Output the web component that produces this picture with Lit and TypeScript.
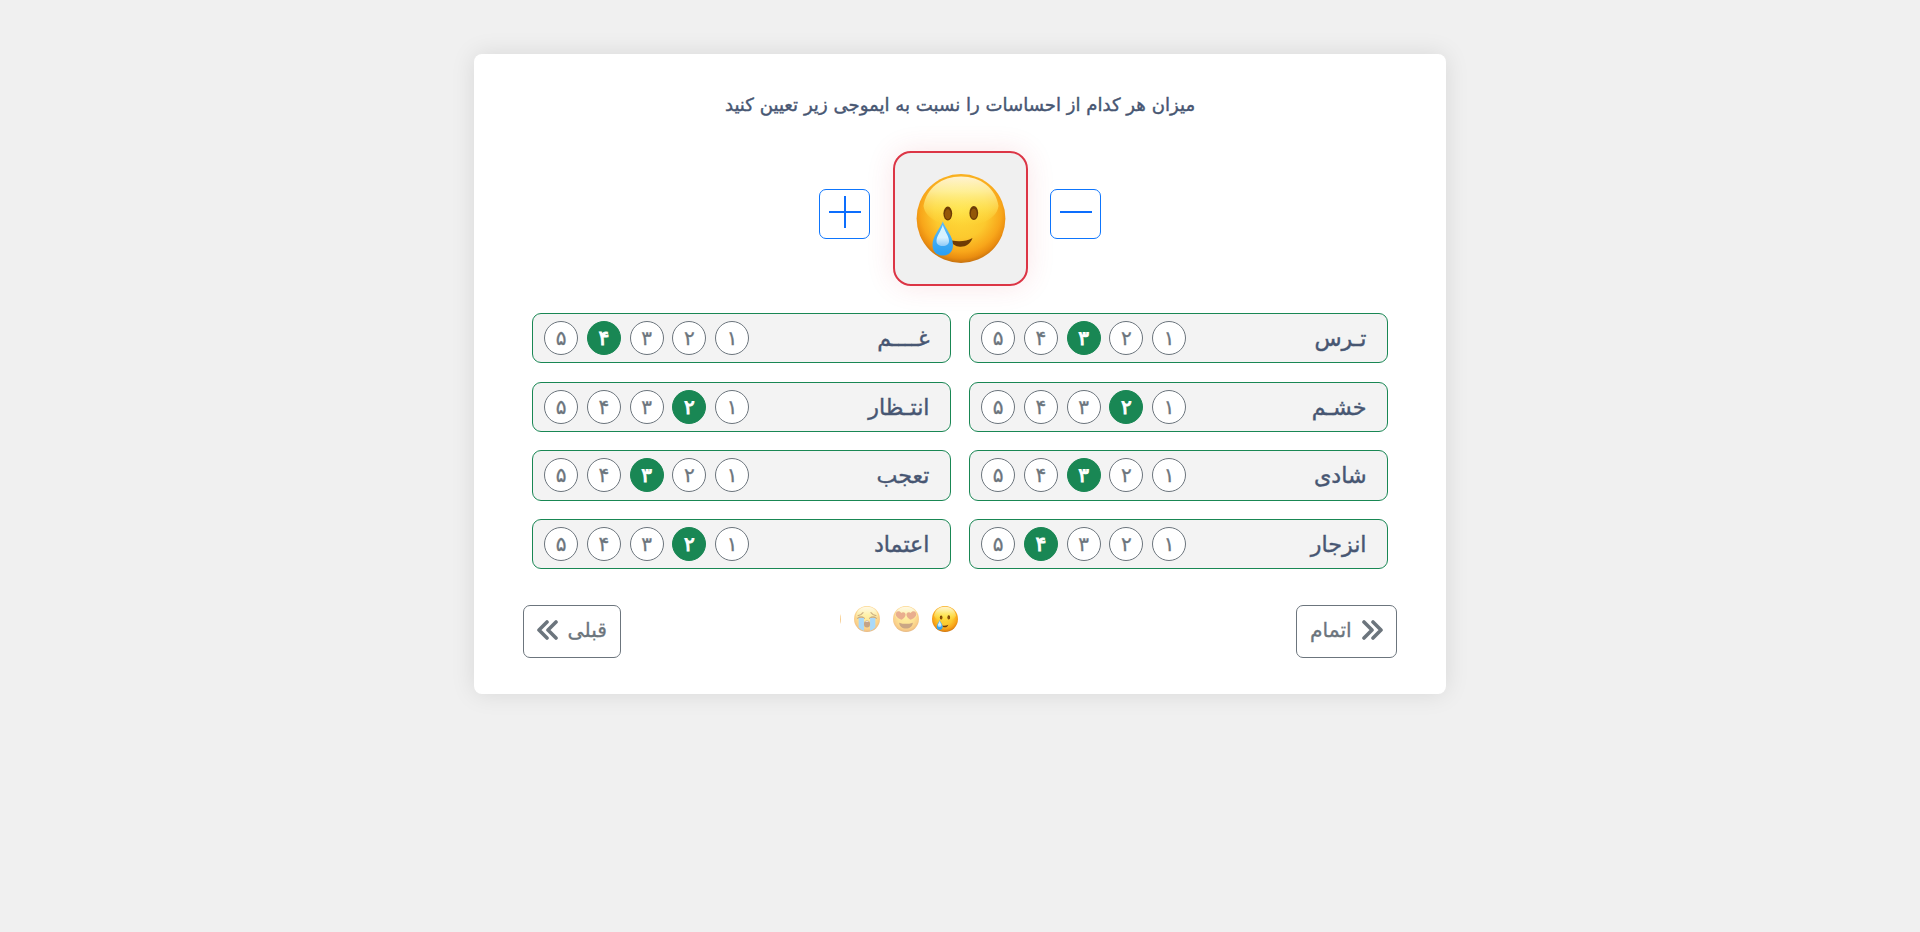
import { LitElement, html, css, svg } from "lit";
import { customElement, property } from "lit/decorators.js";
import { classMap } from "lit/directives/class-map.js";

const DIGITS = ["۱", "۲", "۳", "۴", "۵"];

const EMOTIONS = [
  { label: "تـرس", value: 3 },
  { label: "غــــم", value: 4 },
  { label: "خشـم", value: 2 },
  { label: "انتـظار", value: 2 },
  { label: "شادی", value: 3 },
  { label: "تعجب", value: 3 },
  { label: "انزجار", value: 4 },
  { label: "اعتماد", value: 2 },
];

const faceDefs = svg`
  <defs>
    <radialGradient id="skin" cx="0.5" cy="0.42" r="0.6">
      <stop offset="0" stop-color="#ffdc3c" />
      <stop offset="0.5" stop-color="#fcc92e" />
      <stop offset="0.76" stop-color="#f8a61a" />
      <stop offset="0.88" stop-color="#ea8d10" />
      <stop offset="1" stop-color="#b9680f" />
    </radialGradient>
    <linearGradient id="shine" x1="0" y1="0" x2="0" y2="1">
      <stop offset="0" stop-color="#fff6dc" stop-opacity="0.95" />
      <stop offset="0.3" stop-color="#fff8b0" stop-opacity="0.8" />
      <stop offset="0.65" stop-color="#fff06a" stop-opacity="0.5" />
      <stop offset="1" stop-color="#ffe040" stop-opacity="0" />
    </linearGradient>
    <linearGradient id="drop" x1="0" y1="0" x2="0" y2="1">
      <stop offset="0" stop-color="#5fbcf6" />
      <stop offset="1" stop-color="#2a9ff2" />
    </linearGradient>
    <linearGradient id="gleam" x1="0" y1="0" x2="0" y2="1">
      <stop offset="0" stop-color="#d2f3ff" />
      <stop offset="0.6" stop-color="#d8f2ff" />
      <stop offset="1" stop-color="#8fcaf7" />
    </linearGradient>
  </defs>
  <circle cx="44.5" cy="44.5" r="44.4" fill="url(#skin)" />
  <path d="M44.500 2.500C64 2.500 79 14 82 32 80 46 62 52 44.500 52S9 46 7 32C10 14 25 2.500 44.500 2.500z" fill="url(#shine)" />`;

@customElement("emoji-face")
export class EmojiFace extends LitElement {
  @property() kind = "tear";

  static styles = css`
    :host { display: block; }
    svg { display: block; width: 100%; height: 100%; }
  `;

  private features() {
    if (this.kind === "love") {
      return svg`
        <path d="M29 47C12 41 6 30 11 22c4-6 14-5 17 2 5-5 14-3 15 4 1 8-7 15-14 19z" fill="#d4601f" />
        <path d="M60 47c17-6 23-17 18-25-4-6-14-5-17 2-5-5-14-3-15 4-1 8 7 15 14 19z" fill="#d4601f" />
        <path d="M21 57q23 8 47 0c-1 13-11 20-23.500 20S22 70 21 57z" fill="#96500b" />`;
    }
    if (this.kind === "cry") {
      return svg`
        <path d="M14 33q10-1 17-10M75 33q-10-1-17-10" fill="none" stroke="#9a600b" stroke-width="4" stroke-linecap="round" />
        <path d="M13 42q11-8 22 0M54 42q11-8 22 0" fill="none" stroke="#9a600b" stroke-width="5" stroke-linecap="round" />
        <path d="M16 41h18v44q-10-3-18-11zM55 41h18v33q-8 8-18 11z" fill="#55b4f7" />
        <ellipse cx="44.500" cy="62" rx="10.500" ry="12" fill="#8b4a12" />
        <path d="M37 55q8-6 15 0z" fill="#fff" />`;
    }
    if (this.kind === "plain") return svg``;
    return svg`
      <ellipse cx="31.300" cy="39.600" rx="4.400" ry="7" fill="#6d3b06" />
      <ellipse cx="57.300" cy="39" rx="4.400" ry="7" fill="#6d3b06" />
      <ellipse cx="31.300" cy="40.300" rx="3" ry="5" fill="#945708" />
      <ellipse cx="57.300" cy="39.700" rx="3" ry="5" fill="#945708" />
      <path d="M35 66.500q12 2.500 21-2.500C54 70 49 73 43.500 72.700 39 72.500 35 70 35 66.500z" fill="#6f3b05" />
      <path d="M26.300 47.500C29 55 36.500 62 36.500 71c0 6.500-4 10.600-10.200 10.600S16 77.500 16 71c0-9 7.500-16 10.300-23.500z" fill="url(#drop)" />
      <path d="M26.300 51C28 57 32.500 62 32.500 67c0 3.500-2.500 5-6.200 5S20 70.500 20 67c0-5 4.600-10 6.300-16z" fill="url(#gleam)" />`;
  }

  render() {
    return html`<svg viewBox="0 0 89 89">${faceDefs}${this.features()}</svg>`;
  }
}

@customElement("emotion-row")
export class EmotionRow extends LitElement {
  @property() label = "";
  @property({ type: Number }) value = 0;

  static styles = css`
    :host {
      display: flex;
      align-items: center;
      justify-content: space-between;
      box-sizing: border-box;
      height: 50.200px;
      padding: 0 20.500px 0 11px;
      border: 1px solid #198754;
      border-radius: 9px;
      background: #f3f3f3;
    }
    .label {
      font-size: 22.200px;
      line-height: 30px;
      color: #475672;
      -webkit-text-stroke: 0.400px #475672;
      white-space: nowrap;
    }
    .scale { display: flex; gap: 8.800px; }
    .dot {
      display: flex;
      align-items: center;
      justify-content: center;
      box-sizing: border-box;
      width: 34px;
      height: 34px;
      border: 1px solid #6c757d;
      border-radius: 50%;
      background: #fff;
      color: #6c757d;
      font-size: 20px;
      line-height: 1;
      -webkit-text-stroke: 0.300px #6c757d;
    }
    .dot.on { background: #198754; border-color: #198754; color: #fff; -webkit-text-stroke: 1px #fff; }
  `;

  render() {
    return html`
      <span class="label">${this.label}</span>
      <div class="scale">
        ${DIGITS.map((d, i) => html`<span class=${classMap({ dot: true, on: i + 1 === this.value })}>${d}</span>`)}
      </div>`;
  }
}

@customElement("app-root")
export class AppRoot extends LitElement {
  static styles = css`
    :host {
      display: block;
      box-sizing: border-box;
      height: 932px;
      padding-top: 54px;
      background: #f0f0f0;
      direction: rtl;
      font-family: "DejaVu Sans", sans-serif;
    }
    .card {
      box-sizing: border-box;
      display: flex;
      flex-direction: column;
      width: 972px;
      height: 640px;
      margin: 0 auto;
      padding: 35px 49px 36px;
      border-radius: 8px;
      background: #fff;
      box-shadow: 0 0 24px rgba(0, 0, 0, 0.1);
    }
    .title {
      padding-top: 1px;
      font-size: 18.100px;
      line-height: 30px;
      text-align: center;
      color: #475672;
      -webkit-text-stroke: 0.400px #475672;
      white-space: nowrap;
    }
    .stage { display: flex; align-items: center; justify-content: center; gap: 22px; margin-top: 31px; }
    .step {
      box-sizing: border-box;
      width: 51px;
      height: 50px;
      padding: 6px 8.500px;
      margin-bottom: 9px;
      border: 1px solid #0d75fd;
      border-radius: 7px;
      color: #0d6efd;
    }
    .step.plus { margin-right: 1px; }
    .step svg { display: block; width: 32px; height: 32px; }
    .frame {
      box-sizing: border-box;
      width: 135px;
      height: 135px;
      padding: 21px 20.500px;
      border: 2px solid #dc3545;
      border-radius: 18px;
      background: #f0f0f0;
      box-shadow: 0 0 28px rgba(220, 53, 69, 0.13);
    }
    .frame emoji-face { width: 90px; height: 89px; }
    .grid { display: grid; grid-template-columns: 419px 419px; justify-content: center; gap: 18.500px 18px; margin-top: 27px; }
    .foot { display: flex; justify-content: space-between; margin-top: auto; }
    .nav {
      box-sizing: border-box;
      display: flex;
      align-items: center;
      justify-content: space-between;
      height: 53px;
      padding: 0 13px 3px;
      border: 1px solid #6c757d;
      border-radius: 7px;
      color: #6c757d;
      font-size: 20.300px;
      -webkit-text-stroke: 0.300px #6c757d;
    }
    .nav svg { display: block; width: 21px; height: 20px; }
    .done { width: 101px; }
    .prev { width: 98px; }
    .strip {
      display: flex;
      gap: 13.300px;
      box-sizing: border-box;
      width: 237px;
      height: 28px;
      padding-right: 118.600px;
      overflow: hidden;
    }
    .strip emoji-face { flex: none; width: 26px; height: 26px; margin-top: 1px; opacity: 0.5; }
    .strip emoji-face.current { opacity: 1; }
  `;

  render() {
    return html`
      <main class="card">
        <div class="title"><span>میزان هر کدام از احساسات را نسبت به ایموجی زیر تعیین کنید</span></div>
        <div class="stage">
          <div class="step"><svg viewBox="0 0 32 32"><path d="M0 16h32" stroke="currentColor" stroke-width="2" /></svg></div>
          <div class="frame"><emoji-face></emoji-face></div>
          <div class="step plus"><svg viewBox="0 0 32 32"><path d="M0 16h32M16 0v32" stroke="currentColor" stroke-width="2" /></svg></div>
        </div>
        <div class="grid">
          ${EMOTIONS.map((e) => html`<emotion-row .label=${e.label} .value=${e.value}></emotion-row>`)}
        </div>
        <div class="foot">
          <div class="nav done">
            <svg viewBox="0 0 21 20"><path d="M2 2l8 8-8 8M11 2l8 8-8 8" fill="none" stroke="currentColor" stroke-width="3.600" stroke-linecap="round" stroke-linejoin="round" /></svg>
            <span>اتمام</span>
          </div>
          <div class="strip">
            <emoji-face class="current"></emoji-face>
            <emoji-face kind="love"></emoji-face>
            <emoji-face kind="cry"></emoji-face>
            <emoji-face kind="plain"></emoji-face>
          </div>
          <div class="nav prev">
            <span>قبلی</span>
            <svg viewBox="0 0 21 20"><path d="M19 2l-8 8 8 8M10 2l-8 8 8 8" fill="none" stroke="currentColor" stroke-width="3.600" stroke-linecap="round" stroke-linejoin="round" /></svg>
          </div>
        </div>
      </main>`;
  }
}
